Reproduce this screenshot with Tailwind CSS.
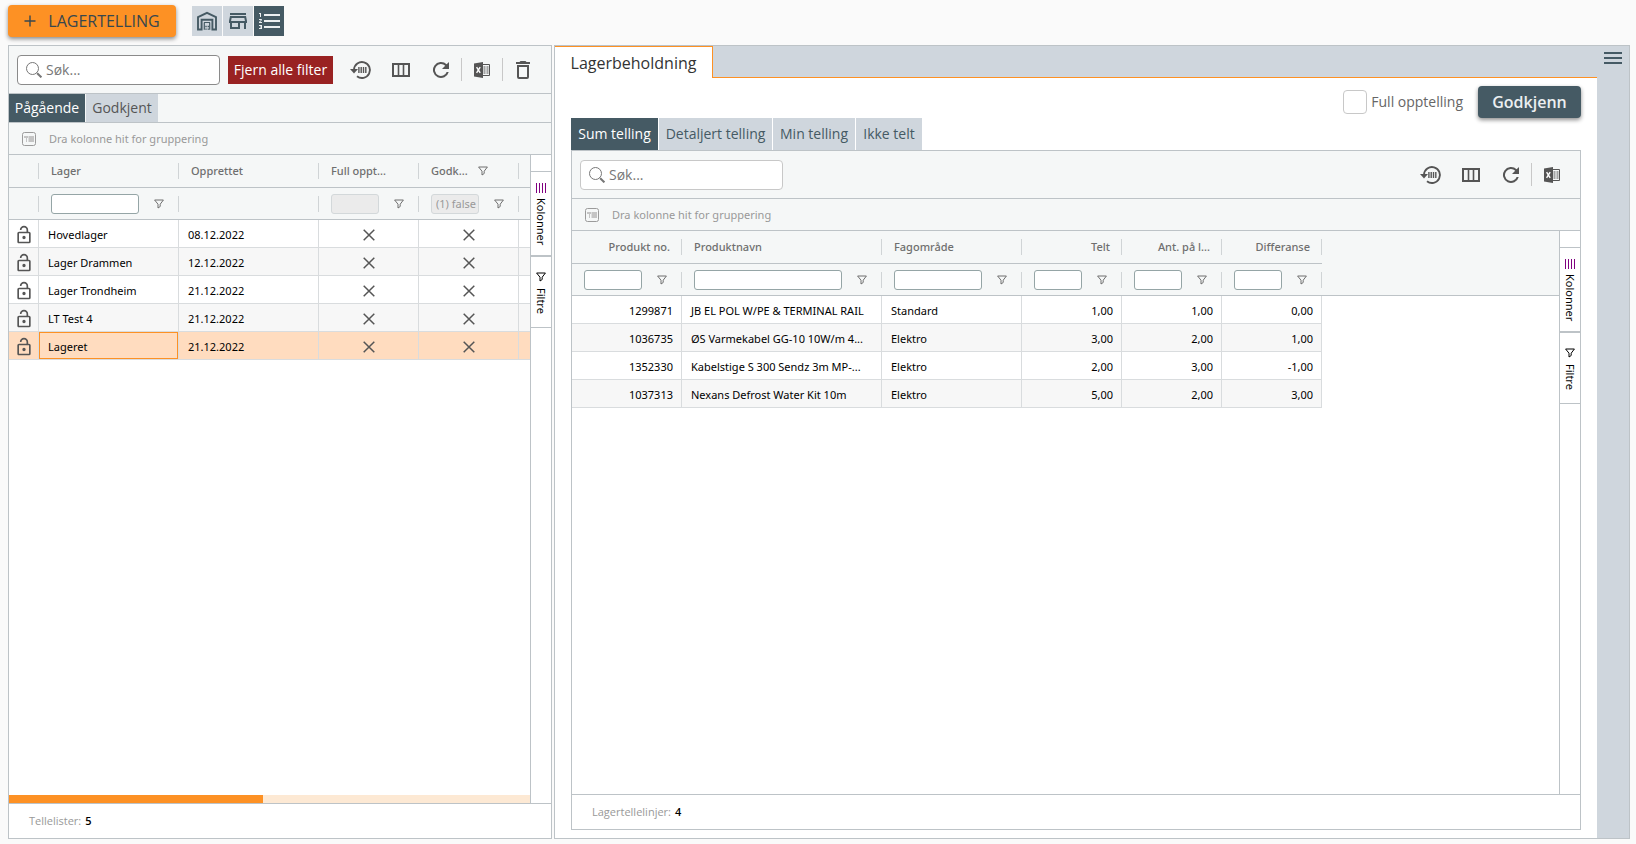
<!DOCTYPE html>
<html lang="no">
<head>
<meta charset="utf-8">
<meta name="viewport" content="width=device-width, initial-scale=1">
<title>Lagertelling</title>
<script src="https://cdn.jsdelivr.net/npm/@tailwindcss/browser@4"></script>
</head>
<body class="flex h-screen flex-col overflow-hidden bg-[#fafafa] font-['Open_Sans',sans-serif] text-sm text-[#555]">

<svg class="hidden" aria-hidden="true">
  <symbol id="i-restore" viewBox="0 0 22 20"><path d="M4 9.5A8 8 0 1 1 7 16.3" fill="none" stroke="currentColor" stroke-width="1.9"/><path d="M0 9h8L4 13.6z" fill="currentColor"/><path d="M8.2 7h1.4v6H8.2zM10.5 7h1.4v6h-1.4zM12.8 7h1.4v6h-1.4zM15.1 7h1.4v6h-1.4z" fill="currentColor"/></symbol>
  <symbol id="i-columns" viewBox="0 0 18 14"><path d="M1 1h16v12H1z" fill="none" stroke="currentColor" stroke-width="2"/><path d="M6.5 1v12M11.5 1v12" stroke="currentColor" stroke-width="1.6"/></symbol>
  <symbol id="i-refresh" viewBox="0 0 24 24"><path fill="currentColor" d="M17.65 6.35A8 8 0 1 0 19.73 14H17.65A6 6 0 1 1 16.22 7.78L13 11H20V4L17.65 6.35Z"/></symbol>
  <symbol id="i-excel" viewBox="0 0 16 16"><path fill="currentColor" d="M9 0v16L0 14.4V1.6z"/><path fill="none" stroke="currentColor" d="M9 2.5h6.5v11H9"/><path stroke="currentColor" stroke-width="1.2" d="M9.5 5h2M12.5 5h2M9.5 7h2M12.5 7h2M9.5 9h2M12.5 9h2M9.5 11h2M12.5 11h2"/><path d="M2.6 5.2l3.6 5.6M6.2 5.2l-3.6 5.6" stroke="#fff" stroke-width="1.4"/></symbol>
  <symbol id="i-trash" viewBox="0 0 24 24"><path fill="currentColor" d="M6 19A2 2 0 0 0 8 21H16A2 2 0 0 0 18 19V7H6V19M8 9H16V19H8V9M15.5 4L14.5 3H9.5L8.5 4H5V6H19V4H15.5Z" fill-rule="evenodd"/></symbol>
  <symbol id="i-search" viewBox="0 0 16 16"><circle cx="6.5" cy="6.5" r="6" fill="none" stroke="currentColor" stroke-width="1"/><path d="M10.5 10.5l1 1" stroke="currentColor"/><path d="M11.2 11.2l4.2 4.2" stroke="currentColor" stroke-width="2"/></symbol>
  <symbol id="i-group" viewBox="0 0 14 14"><rect x=".5" y=".5" width="13" height="13" rx="2" fill="none" stroke="#9b9b9b"/><path fill="#c4c4c4" d="M2 4h4v2H5v4H4V6H2zM6.5 4H12v6H6.5z"/></symbol>
  <symbol id="i-filter" viewBox="0 0 10 10"><path d="M.6 1h8.8L6.2 5.2v2.3L4 9V5.2z" fill="none" stroke="currentColor" stroke-width="1"/></symbol>
  <symbol id="i-lock" viewBox="0 0 24 24"><path fill="currentColor" fill-rule="evenodd" d="M18 20V10H6V20H18M18 8A2 2 0 0 1 20 10V20A2 2 0 0 1 18 22H6C4.89 22 4 21.1 4 20V10A2 2 0 0 1 6 8H15V6A3 3 0 0 0 9 6H7A5 5 0 0 1 17 6V8H18M12 17A2 2 0 1 1 12 13A2 2 0 0 1 12 17Z"/></symbol>
  <symbol id="i-x" viewBox="0 0 12 12"><path d="M.7.7l10.6 10.6M11.3.7L.7 11.3" stroke="currentColor" stroke-width="1.5"/></symbol>
  <symbol id="i-bars" viewBox="0 0 12 10"><path d="M1.5 0v10M4.5 0v10M7.5 0v10M10.5 0v10" stroke="#800080"/></symbol>
</svg>

<header class="flex h-[45px] shrink-0 items-start px-2 pt-[5px]">
  <button class="flex h-8 w-[168px] items-center justify-center gap-3 rounded bg-[#fd9124] text-base font-medium text-[#37474f] shadow-[0_2px_4px_rgba(0,0,0,0.45)]">
    <svg class="h-3 w-3" viewBox="0 0 12 12"><path d="M6 .5v11M.5 6h11" stroke="currentColor" stroke-width="1.4"/></svg>LAGERTELLING
  </button>
  <nav class="ml-4 mt-px flex gap-px text-[#455a64]">
    <button aria-label="Varehus" class="flex h-[30px] w-[30px] items-center justify-center bg-[#cfd6dd]">
      <svg class="h-5 w-5" viewBox="0 0 20 20" fill="none" stroke="currentColor" stroke-width="1.9"><path d="M1 18.5V6.2L10 1.9l9 4.3v12.3h-3.6V8.8H4.6v9.7z"/><path d="M7.3 18.8v-7.3M12.7 18.8v-7.3M7 11.5h6" stroke-width="1.2"/><path d="M8.3 15.5h1.4M10.6 15.5H12M8.3 18.2h1.4M10.6 18.2H12" stroke-width="1.3"/></svg>
    </button>
    <button aria-label="Butikk" class="flex h-[30px] w-[30px] items-center justify-center bg-[#cfd6dd]">
      <svg class="h-6 w-6" viewBox="0 0 24 24"><path fill="currentColor" fill-rule="evenodd" d="M18.36 9L18.96 12H5.04L5.64 9H18.36M20 4H4V6H20V4M20 7H4L3 12V14H4V20H14V14H18V20H20V14H21V12L20 7M6 18V14H12V18H6Z"/></svg>
    </button>
    <button aria-label="Telling" class="flex h-[30px] w-[30px] items-center justify-center bg-[#455a64] text-[#eceff1]">
      <svg class="h-6 w-6" viewBox="0 0 24 24"><path fill="currentColor" d="M7 13V11H23V13H7M7 19V17H23V19H7M7 7V5H23V7H7M3 8V5H2V4H4V8H3M2 17V16H5V20H2V19H4V18.5H3V17.5H4V17H2M4.25 10A.75.75 0 0 1 5 10.75C5 10.95 4.92 11.14 4.79 11.27L3.12 13H5V14H2V13.08L4 11H2V10H4.25Z"/></svg>
    </button>
  </nav>
</header>

<main class="flex min-h-0 flex-1 gap-[2px] pb-[5px] pl-2 pr-[6px]">

  <section class="flex w-[34%] min-w-[520px] max-w-[544px] shrink-0 flex-col border border-[#bdc3c7] bg-white">
    <div class="flex h-12 shrink-0 items-center border-b border-[#bdc3c7] bg-[#f5f7f7] pl-2">
      <label class="flex h-[30px] w-[203px] items-center gap-1 rounded border border-[#8a8a8a] bg-white pl-2 text-[#777]">
        <svg class="h-4 w-4"><use href="#i-search"/></svg>
        <input aria-label="Søk" placeholder="Søk..." class="w-40 outline-none placeholder:text-[#777]">
      </label>
      <button class="ml-2 h-7 w-[105px] whitespace-nowrap bg-[#992222] text-sm text-white">Fjern alle filter</button>
      <div class="ml-auto flex items-center text-[#555]">
        <button aria-label="Tilbakestill" class="flex w-10 justify-center"><svg class="h-5 w-[22px]"><use href="#i-restore"/></svg></button>
        <button aria-label="Kolonner" class="flex w-10 justify-center"><svg class="h-[14px] w-[18px]"><use href="#i-columns"/></svg></button>
        <button aria-label="Oppdater" class="flex w-10 justify-center"><svg class="h-6 w-6"><use href="#i-refresh"/></svg></button>
        <button aria-label="Excel" class="flex h-[23px] w-[41px] items-center justify-center border-l border-[#c8c8c8]"><svg class="h-4 w-4"><use href="#i-excel"/></svg></button>
        <button aria-label="Slett" class="flex h-[23px] w-[41px] items-center justify-center border-l border-[#c8c8c8]"><svg class="h-6 w-6"><use href="#i-trash"/></svg></button>
        <span class="w-2"></span>
      </div>
    </div>
    <div class="flex h-[29px] shrink-0 gap-px border-b border-[#bdc3c7] bg-[#f5f7f7]">
      <button class="w-[76px] bg-[#455a64] text-white">Pågående</button>
      <button class="w-[72px] bg-[#cfd6dd]">Godkjent</button>
    </div>
    <div class="flex h-8 shrink-0 items-center gap-[13px] border-b border-[#bdc3c7] bg-[#f5f7f7] pl-[13px] pt-px font-['Noto_Sans',sans-serif] text-[11px] text-[#999]">
      <svg class="h-[14px] w-[14px]"><use href="#i-group"/></svg>Dra kolonne hit for gruppering
    </div>
    <div class="flex min-h-0 flex-1">
      <div class="flex min-w-0 flex-1 flex-col">
        <table class="w-full table-fixed border-separate border-spacing-0 font-['Noto_Sans',sans-serif] text-[11px] text-black [&_td]:h-7 [&_td]:border-b [&_td]:border-r [&_td]:border-[#d9dcde] [&_td]:p-0 [&_td]:pl-[9px] [&_td]:pt-[2px] [&_th]:border-b [&_th]:border-[#bdc3c7] [&_th]:bg-[#f5f7f7] [&_th]:p-0">
          <colgroup><col class="w-[30px]"><col class="w-[140px]"><col class="w-[140px]"><col class="w-[100px]"><col class="w-[100px]"><col></colgroup>
          <thead class="text-left text-[#6f6f6f] [&_div]:flex [&_div]:h-4 [&_div]:items-center [&_div]:border-r [&_div]:border-[#d0d4d6] [&_div]:pl-3 [&_th]:font-medium">
            <tr class="h-[33px]">
              <th><div></div></th><th><div>Lager</div></th><th><div>Opprettet</div></th><th><div>Full oppt...</div></th>
              <th><div class="gap-[10px]">Godk...<svg class="h-[10px] w-[10px]"><use href="#i-filter"/></svg></div></th><th></th>
            </tr>
            <tr class="h-8">
              <th><div></div></th>
              <th><div class="pr-[14px]"><input aria-label="Filter lager" class="h-5 min-w-0 flex-1 rounded-[3px] border border-[#95a5a6] bg-white px-1"><button aria-label="Filter" class="ml-[15px]"><svg class="h-[10px] w-[10px]"><use href="#i-filter"/></svg></button></div></th>
              <th><div></div></th>
              <th><div class="pr-[14px]"><input disabled aria-label="Filter full opptelling" class="h-5 min-w-0 flex-1 rounded-[3px] border border-[#d3d8da] bg-[#ebebeb]"><button aria-label="Filter" class="ml-[15px]"><svg class="h-[10px] w-[10px]"><use href="#i-filter"/></svg></button></div></th>
              <th><div class="pr-[14px]"><input disabled value="(1) false" aria-label="Filter godkjent" class="h-5 min-w-0 flex-1 rounded-[3px] border border-[#d3d8da] bg-[#ebebeb] pl-1 font-normal text-[#999]"><button aria-label="Filter" class="ml-[15px]"><svg class="h-[10px] w-[10px]"><use href="#i-filter"/></svg></button></div></th>
              <th></th>
            </tr>
          </thead>
          <tbody class="[&_svg]:text-[#555] [&_tr>td:first-child]:pl-[5px] [&_tr>td:last-child]:border-r-0 [&_tr>td:nth-child(n+4)]:pl-0">
            <tr><td><svg class="h-5 w-5"><use href="#i-lock"/></svg></td><td>Hovedlager</td><td>08.12.2022</td><td><svg class="mx-auto h-3 w-3"><use href="#i-x"/></svg></td><td><svg class="mx-auto h-3 w-3"><use href="#i-x"/></svg></td><td></td></tr>
            <tr class="bg-[#f7f7f7]"><td><svg class="h-5 w-5"><use href="#i-lock"/></svg></td><td>Lager Drammen</td><td>12.12.2022</td><td><svg class="mx-auto h-3 w-3"><use href="#i-x"/></svg></td><td><svg class="mx-auto h-3 w-3"><use href="#i-x"/></svg></td><td></td></tr>
            <tr><td><svg class="h-5 w-5"><use href="#i-lock"/></svg></td><td>Lager Trondheim</td><td>21.12.2022</td><td><svg class="mx-auto h-3 w-3"><use href="#i-x"/></svg></td><td><svg class="mx-auto h-3 w-3"><use href="#i-x"/></svg></td><td></td></tr>
            <tr class="bg-[#f7f7f7]"><td><svg class="h-5 w-5"><use href="#i-lock"/></svg></td><td>LT Test 4</td><td>21.12.2022</td><td><svg class="mx-auto h-3 w-3"><use href="#i-x"/></svg></td><td><svg class="mx-auto h-3 w-3"><use href="#i-x"/></svg></td><td></td></tr>
            <tr class="bg-[#ffdcbf]"><td><svg class="h-5 w-5"><use href="#i-lock"/></svg></td><td class="shadow-[inset_0_0_0_1px_#fd9124]">Lageret</td><td>21.12.2022</td><td><svg class="mx-auto h-3 w-3"><use href="#i-x"/></svg></td><td><svg class="mx-auto h-3 w-3"><use href="#i-x"/></svg></td><td></td></tr>
          </tbody>
        </table>
        <div class="mt-auto h-2 bg-[#fde9d4]"><div class="h-2 bg-[#fd9124]" style="width:48.8%"></div></div>
      </div>
      <aside class="w-[21px] shrink-0 border-l border-[#bdc3c7] pt-4 font-['Noto_Sans',sans-serif] text-[11px] text-black">
        <button class="flex h-[85px] w-full flex-col items-center gap-1 border-y border-[#bdc3c7] pt-[11px]"><svg class="h-[10px] w-3"><use href="#i-bars"/></svg><span class="pt-px [writing-mode:vertical-rl]">Kolonner</span></button>
        <button class="flex h-[72px] w-full flex-col items-center gap-1 border-y border-[#bdc3c7] pt-[15px]"><svg class="h-[10px] w-[10px]"><use href="#i-filter"/></svg><span class="pt-[2px] [writing-mode:vertical-rl]">Filtre</span></button>
      </aside>
    </div>
    <footer class="flex h-[35px] shrink-0 items-center gap-1 border-t border-[#bdc3c7] pl-5 text-[11px] text-[#999]">Tellelister: <span class="font-semibold text-black">5</span></footer>
  </section>

  <section class="flex min-w-0 flex-1 border border-[#bdc3c7] bg-white">
    <div class="flex min-w-0 flex-1 flex-col">
      <div class="flex h-8 shrink-0 bg-[#cfd6dd]">
        <button class="w-[158px] border-r border-t border-[#fd9124] bg-white text-base text-[#333]">Lagerbeholdning</button>
        <div class="flex-1 border-b border-[#fd9124]"></div>
      </div>
      <div class="flex shrink-0 items-center justify-end gap-[15px] pr-4 pt-2">
        <label class="flex items-center gap-1 text-[#666]"><input type="checkbox" class="h-6 w-6 appearance-none rounded-sm border border-[#c8c8c8] bg-white">Full opptelling</label>
        <button class="h-8 w-[103px] rounded bg-[#455a64] text-base font-semibold text-[#eceff1] shadow-[0_2px_4px_rgba(0,0,0,0.45)]">Godkjenn</button>
      </div>
      <div class="flex h-8 shrink-0 gap-px pl-4">
        <button class="w-[87px] bg-[#455a64] text-white">Sum telling</button>
        <button class="w-[113px] bg-[#cfd6dd] text-[#455a64]">Detaljert telling</button>
        <button class="w-[82px] bg-[#cfd6dd] text-[#455a64]">Min telling</button>
        <button class="w-[66px] bg-[#cfd6dd] text-[#455a64]">Ikke telt</button>
      </div>
      <div class="mx-4 mb-2 flex min-h-0 flex-1 flex-col border border-[#bdc3c7]">
        <div class="flex h-12 shrink-0 items-center border-b border-[#bdc3c7] bg-[#f5f7f7] pl-2">
          <label class="flex h-[30px] w-[203px] items-center gap-1 rounded border border-[#c8c8c8] bg-white pl-2 text-[#777]">
            <svg class="h-4 w-4"><use href="#i-search"/></svg>
            <input aria-label="Søk" placeholder="Søk..." class="w-40 outline-none placeholder:text-[#777]">
          </label>
          <div class="ml-auto flex items-center text-[#555]">
            <button aria-label="Tilbakestill" class="flex w-10 justify-center"><svg class="h-5 w-[22px]"><use href="#i-restore"/></svg></button>
            <button aria-label="Kolonner" class="flex w-10 justify-center"><svg class="h-[14px] w-[18px]"><use href="#i-columns"/></svg></button>
            <button aria-label="Oppdater" class="flex w-10 justify-center"><svg class="h-6 w-6"><use href="#i-refresh"/></svg></button>
            <button aria-label="Excel" class="flex h-[23px] w-[41px] items-center justify-center border-l border-[#c8c8c8]"><svg class="h-4 w-4"><use href="#i-excel"/></svg></button>
            <span class="w-2"></span>
          </div>
        </div>
        <div class="flex h-8 shrink-0 items-center gap-[13px] border-b border-[#bdc3c7] bg-[#f5f7f7] pl-[13px] pt-px font-['Noto_Sans',sans-serif] text-[11px] text-[#999]">
          <svg class="h-[14px] w-[14px]"><use href="#i-group"/></svg>Dra kolonne hit for gruppering
        </div>
        <div class="flex min-h-0 flex-1">
          <div class="min-w-0 flex-1">
            <table class="w-full table-fixed border-separate border-spacing-0 font-['Noto_Sans',sans-serif] text-[11px] text-black [&_td]:h-7 [&_td]:border-b [&_td]:border-r [&_td]:border-[#d9dcde] [&_td]:p-0 [&_td]:pl-[9px] [&_td]:pr-2 [&_td]:pt-[2px] [&_th]:border-b [&_th]:border-[#bdc3c7] [&_th]:bg-[#f5f7f7] [&_th]:p-0">
              <colgroup><col class="w-[110px]"><col class="w-[200px]"><col class="w-[140px]"><col class="w-[100px]"><col class="w-[100px]"><col class="w-[100px]"><col></colgroup>
              <thead class="text-left text-[#6f6f6f] [&_div]:flex [&_div]:h-4 [&_div]:items-center [&_div]:border-r [&_div]:border-[#d0d4d6] [&_div]:pl-3 [&_th]:font-medium">
                <tr class="h-[33px] [&_div]:pr-[11px]">
                  <th><div class="justify-end">Produkt no.</div></th><th><div>Produktnavn</div></th><th><div>Fagområde</div></th><th><div class="justify-end">Telt</div></th><th><div class="justify-end">Ant. på l...</div></th><th><div class="justify-end">Differanse</div></th><th class="border-b-[#f5f7f7]!"></th>
                </tr>
                <tr class="h-8 [&_button]:ml-[15px] [&_div]:pr-[14px] [&_input]:h-5 [&_input]:min-w-0 [&_input]:flex-1 [&_input]:rounded-[3px] [&_input]:border [&_input]:border-[#95a5a6] [&_input]:bg-white [&_input]:px-1 [&_svg]:h-[10px] [&_svg]:w-[10px]">
                  <th><div><input aria-label="Filter produkt no."><button aria-label="Filter"><svg><use href="#i-filter"/></svg></button></div></th>
                  <th><div><input aria-label="Filter produktnavn"><button aria-label="Filter"><svg><use href="#i-filter"/></svg></button></div></th>
                  <th><div><input aria-label="Filter fagområde"><button aria-label="Filter"><svg><use href="#i-filter"/></svg></button></div></th>
                  <th><div><input aria-label="Filter telt"><button aria-label="Filter"><svg><use href="#i-filter"/></svg></button></div></th>
                  <th><div><input aria-label="Filter antall på lager"><button aria-label="Filter"><svg><use href="#i-filter"/></svg></button></div></th>
                  <th><div><input aria-label="Filter differanse"><button aria-label="Filter"><svg><use href="#i-filter"/></svg></button></div></th>
                  <th></th>
                </tr>
              </thead>
              <tbody class="whitespace-nowrap [&_tr>td:first-child]:text-right [&_tr>td:nth-child(n+4)]:text-right">
                <tr><td>1299871</td><td>JB EL POL W/PE &amp; TERMINAL RAIL</td><td>Standard</td><td>1,00</td><td>1,00</td><td>0,00</td></tr>
                <tr class="[&_td]:bg-[#f7f7f7]"><td>1036735</td><td>ØS Varmekabel GG-10 10W/m 4...</td><td>Elektro</td><td>3,00</td><td>2,00</td><td>1,00</td></tr>
                <tr><td>1352330</td><td>Kabelstige S 300 Sendz 3m MP-...</td><td>Elektro</td><td>2,00</td><td>3,00</td><td>-1,00</td></tr>
                <tr class="[&_td]:bg-[#f7f7f7]"><td>1037313</td><td>Nexans Defrost Water Kit 10m</td><td>Elektro</td><td>5,00</td><td>2,00</td><td>3,00</td></tr>
              </tbody>
            </table>
          </div>
          <aside class="w-[21px] shrink-0 border-l border-[#bdc3c7] pt-4 font-['Noto_Sans',sans-serif] text-[11px] text-black">
            <button class="flex h-[85px] w-full flex-col items-center gap-1 border-y border-[#bdc3c7] pt-[11px]"><svg class="h-[10px] w-3"><use href="#i-bars"/></svg><span class="pt-px [writing-mode:vertical-rl]">Kolonner</span></button>
            <button class="flex h-[72px] w-full flex-col items-center gap-1 border-y border-[#bdc3c7] pt-[15px]"><svg class="h-[10px] w-[10px]"><use href="#i-filter"/></svg><span class="pt-[2px] [writing-mode:vertical-rl]">Filtre</span></button>
          </aside>
        </div>
        <footer class="flex h-[35px] shrink-0 items-center gap-1 border-t border-[#bdc3c7] pl-5 text-[11px] text-[#999]">Lagertellelinjer: <span class="font-semibold text-black">4</span></footer>
      </div>
    </div>
    <div class="flex w-8 shrink-0 justify-center bg-[#cfd6dd] pt-[6px]">
      <button aria-label="Meny" class="h-3 text-[#455a64]"><svg class="h-3 w-[18px]" viewBox="0 0 18 12"><path fill="currentColor" d="M0 0h18v2H0zM0 5h18v2H0zM0 10h18v2H0z"/></svg></button>
    </div>
  </section>
</main>
</body>
</html>
